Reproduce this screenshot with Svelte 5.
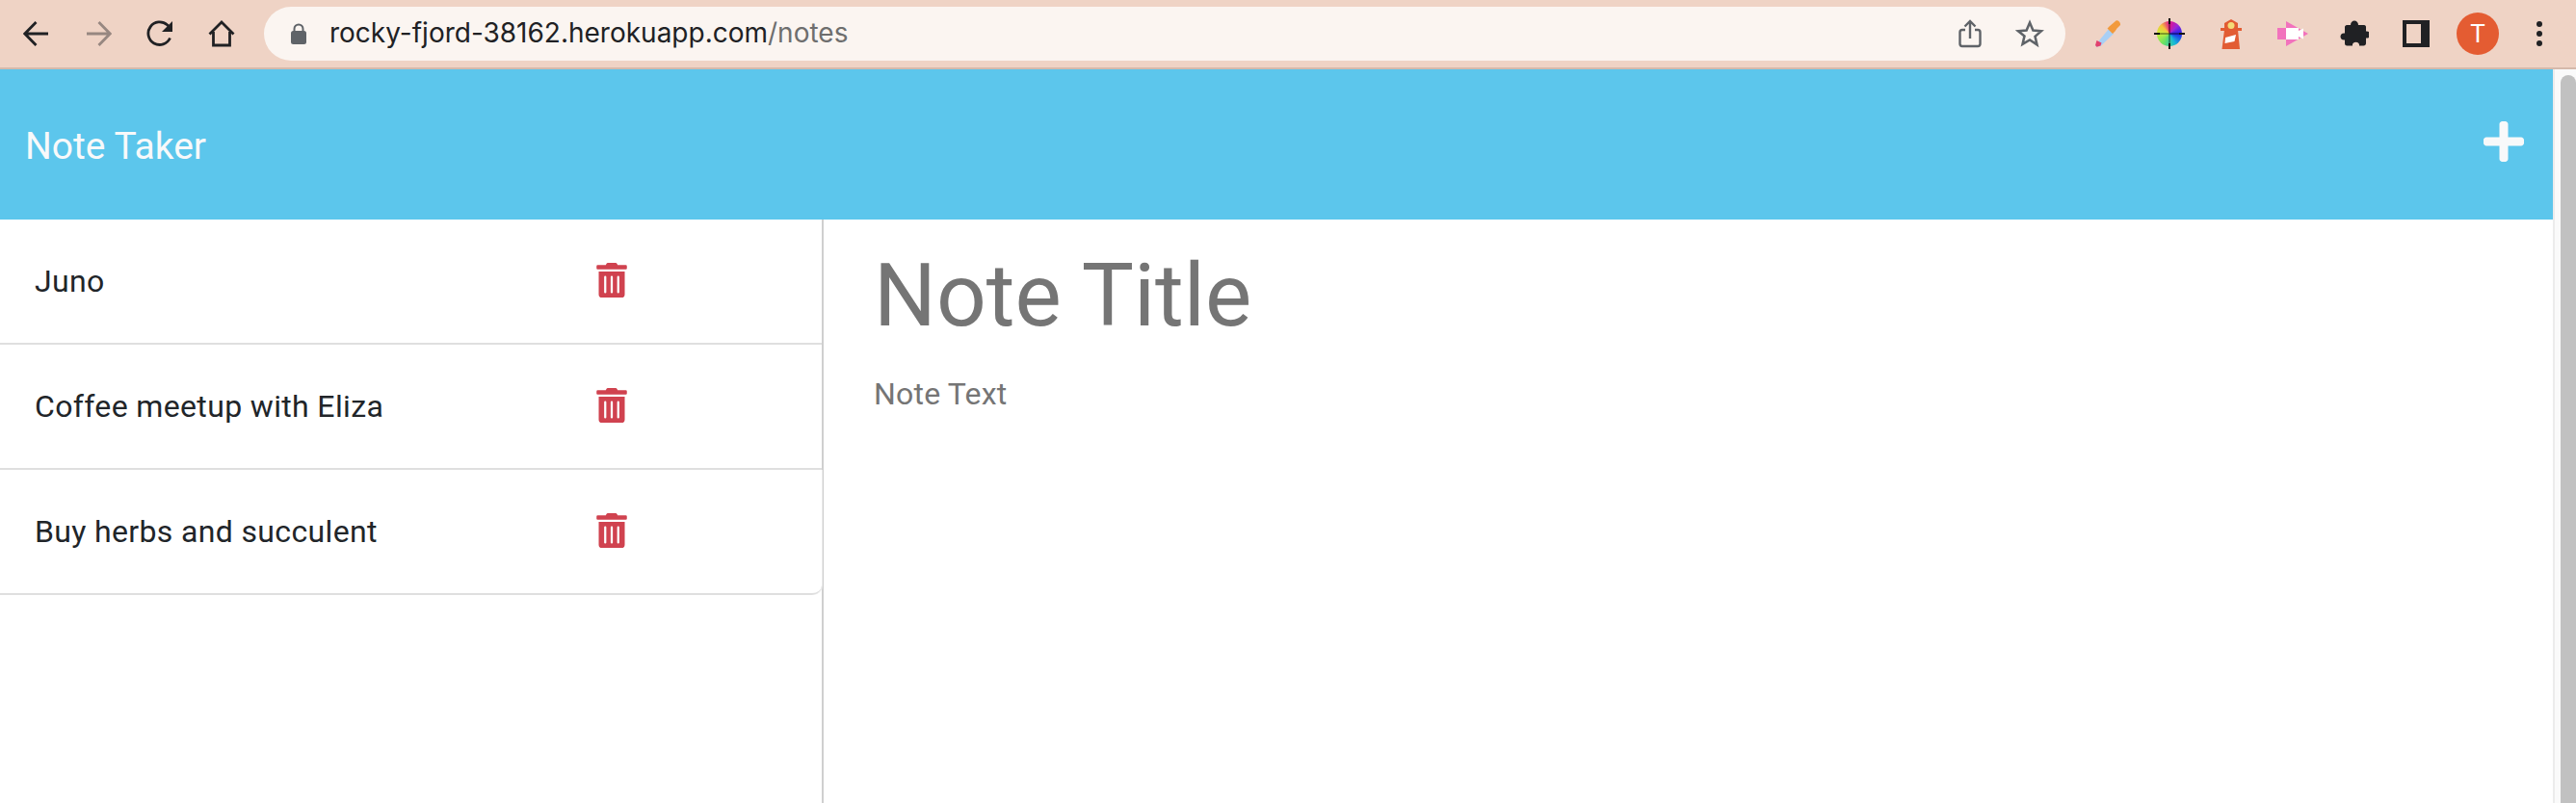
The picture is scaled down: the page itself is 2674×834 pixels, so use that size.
<script>
  const notes = ["Juno", "Coffee meetup with Eliza", "Buy herbs and succulent"];
</script>

<div class="page">
  <div class="toolbar">
    <div class="btn">
      <svg width="28" height="28" viewBox="0 0 28 28"><path d="M26 14H2M13.5 2 1.800 14l11.700 12" class="s" /></svg>
    </div>
    <div class="btn faded">
      <svg width="28" height="28" viewBox="0 0 28 28"><path d="M2 14h24M14.500 2l11.700 12-11.700 12" class="s" /></svg>
    </div>
    <div class="btn">
      <svg width="28" height="28" viewBox="0 0 28 28">
        <path d="M24.500 18.500A11.800 11.800 0 1 1 21.500 4.800L25 8" class="s" />
        <path d="M27 1v11H16z" fill="#202124" />
      </svg>
    </div>
    <div class="btn">
      <svg width="28" height="28" viewBox="0 0 28 28">
        <path d="M1.500 14.500 14 2l12.500 12.500M5.500 12v14h17V12" class="s" />
      </svg>
    </div>

    <div class="omnibox">
      <svg class="lock" width="16" height="22" viewBox="0 0 16 22">
        <rect x="0" y="8" width="16" height="14" rx="2.500" fill="#5f6368" />
        <path d="M3.500 9V6a4.500 4.500 0 0 1 9 0v3" fill="none" stroke="#5f6368" stroke-width="2" />
      </svg>
      <span class="url">rocky-fjord-38162.herokuapp.com<span class="path">/notes</span></span>
      <div class="omni-actions">
        <svg width="24" height="30" viewBox="0 0 24 30">
          <path d="M7 11H4a2.500 2.500 0 0 0-2.500 2.500v12A2.500 2.500 0 0 0 4 28h16a2.500 2.500 0 0 0 2.500-2.500v-12A2.500 2.500 0 0 0 20 11h-3M12 20V2.500M6.500 7.500 12 2l5.500 5.500" fill="none" stroke="#5f6368" stroke-width="2.400" />
        </svg>
        <svg width="30" height="30" viewBox="0 0 30 30">
          <path d="m15 3.500 3.400 8 8.600.7-6.500 5.700 2 8.500L15 21.400l-7.500 4.500 2-8.500L3 12.200l8.600-.7z" fill="none" stroke="#5f6368" stroke-width="2.500" stroke-linejoin="miter" />
        </svg>
      </div>
    </div>

    <div class="btn">
      <svg width="28" height="28" viewBox="0 0 28 28">
        <path d="M15 9 20 14 7 26.500l-4.500 1.300L1 26z" fill="#a8cff5" />
        <path d="M1 26l1.500-5 5 2.500-1 3-4 1.300z" fill="#e2416e" />
        <path d="M13.500 8.500 16 6l3-2.500 3.500-3c2-.8 5 1.500 4.500 4.500l-3.500 3.500-2 3-2.500 2.500z" fill="#f29a3c" />
      </svg>
    </div>
    <div class="btn">
      <div class="wheel">
        <i class="hair h"></i>
        <i class="hair v"></i>
        <i class="tick t"></i>
        <i class="tick b"></i>
        <i class="tick l"></i>
        <i class="tick r"></i>
      </div>
    </div>
    <div class="btn">
      <svg width="24" height="32" viewBox="0 0 24 32">
        <path d="M5 5l7-4 7 4v7l2 20H2.500L5 12z" fill="#e25c33" />
        <rect x="1" y="10" width="22" height="3" fill="#e25c33" />
        <circle cx="12" cy="7.500" r="3.500" fill="#f4dc78" />
        <path d="M6 20l11-3-1.500 7-10 2z" fill="#fff" />
      </svg>
    </div>
    <div class="btn">
      <svg width="34" height="28" viewBox="0 0 34 28">
        <path d="M1 8h9V1l23 13-23 13v-7H1z" fill="#f272bd" />
        <path d="M10 8h13v3l5-2.500v11L23 17v3H10z" fill="#fff" />
      </svg>
    </div>
    <div class="btn">
      <svg width="30" height="30" viewBox="0 0 30 30">
        <path d="M11 6c0-6 8-6 8 0h6c1.500 0 2 1 2 2v4.500c6-1 6 8 0 7V25c0 1.500-1 2.500-2.500 2.500H20c1-5-8-5-7 0H7.500C5.500 27.500 5 26.500 5 25v-3.500c-6 1-6-8 0-7V8c0-1 1-2 2-2z" fill="#202124" />
      </svg>
    </div>
    <div class="btn">
      <div class="panel"></div>
    </div>
    <div class="btn">
      <div class="avatar">T</div>
    </div>
    <div class="btn">
      <div class="dots"><i></i><i></i><i></i></div>
    </div>
  </div>

  <div class="viewport">
    <div class="content">
      <nav class="navbar">
        <span class="brand">Note Taker</span>
        <svg class="plus" width="42" height="48" viewBox="0 0 448 512">
          <path d="M416 208H272V64c0-17.670-14.330-32-32-32h-32c-17.670 0-32 14.330-32 32v144H32c-17.670 0-32 14.330-32 32v32c0 17.670 14.330 32 32 32h144v144c0 17.670 14.330 32 32 32h32c17.670 0 32-14.330 32-32V304h144c17.670 0 32-14.330 32-32v-32c0-17.670-14.330-32-32-32z" fill="#f8f9fa" />
        </svg>
      </nav>

      <div class="columns">
        <aside class="sidebar">
          <ul class="list">
            {#each notes as note}
              <li>
                <span>{note}</span>
                <svg class="trash" width="32" height="36" viewBox="0 0 448 512">
                  <path d="M32 464a48 48 0 0 0 48 48h288a48 48 0 0 0 48-48V128H32zm272-256a16 16 0 0 1 32 0v224a16 16 0 0 1-32 0zm-96 0a16 16 0 0 1 32 0v224a16 16 0 0 1-32 0zm-96 0a16 16 0 0 1 32 0v224a16 16 0 0 1-32 0zM432 32H312l-9.400-18.700A24 24 0 0 0 281.100 0H166.800a23.720 23.720 0 0 0-21.400 13.300L136 32H16A16 16 0 0 0 0 48v32a16 16 0 0 0 16 16h416a16 16 0 0 0 16-16V48a16 16 0 0 0-16-16z" fill="#d0424f" />
                </svg>
              </li>
            {/each}
          </ul>
        </aside>
        <main class="editor">
          <div class="title">Note Title</div>
          <div class="text">Note Text</div>
        </main>
      </div>
    </div>
    <div class="scrollbar"><div class="thumb"></div></div>
  </div>
</div>

<style>
  :global(body) {
    margin: 0;
    background: #fff;
    overflow: hidden;
  }
  .page {
    height: 834px;
    display: flex;
    flex-direction: column;
    font-family: Roboto, "Liberation Sans", sans-serif;
    color: #212529;
  }

  .toolbar {
    height: 70px;
    flex: none;
    display: flex;
    align-items: center;
    padding: 0 6px;
    background: #efd3c5;
    border-bottom: 2px solid #d5b9ab;
  }
  .btn {
    width: 64px;
    height: 64px;
    flex: none;
    display: flex;
    align-items: center;
    justify-content: center;
    position: relative;
  }
  .btn.faded {
    opacity: 0.42;
  }
  .s {
    fill: none;
    stroke: #202124;
    stroke-width: 2.800;
  }

  .omnibox {
    flex: 1;
    height: 56px;
    margin: 0 12px;
    display: flex;
    align-items: center;
    padding-left: 28px;
    padding-right: 22px;
    background: #fbf5f1;
    border-radius: 28px;
  }
  .lock {
    margin-right: 24px;
  }
  .url {
    font-family: Inter, sans-serif;
    font-size: 28px;
    color: #202124;
    white-space: nowrap;
    margin-bottom: 2px;
  }
  .path {
    color: #6e6e6e;
  }
  .omni-actions {
    margin-left: auto;
    display: flex;
    align-items: center;
    gap: 35px;
  }

  .wheel {
    width: 26px;
    height: 26px;
    border-radius: 50%;
    position: relative;
    background: conic-gradient(#e0158c, #9c27d8 45deg, #2222ee 90deg, #16b8d8 150deg, #66e066 210deg, #c8f03c 270deg, #f6c23c 315deg, #e0158c);
  }
  .hair {
    position: absolute;
    background: rgba(0, 0, 0, 0.35);
  }
  .hair.h {
    left: 0;
    right: 0;
    top: 12px;
    height: 2px;
  }
  .hair.v {
    top: 0;
    bottom: 0;
    left: 12px;
    width: 2px;
  }
  .tick {
    position: absolute;
    background: #111;
  }
  .tick.t,
  .tick.b {
    left: 12px;
    width: 2px;
    height: 6px;
  }
  .tick.t {
    top: -3px;
  }
  .tick.b {
    bottom: -3px;
  }
  .tick.l,
  .tick.r {
    top: 12px;
    width: 6px;
    height: 2px;
  }
  .tick.l {
    left: -3px;
  }
  .tick.r {
    right: -3px;
  }
  .panel {
    width: 28px;
    height: 28px;
    box-sizing: border-box;
    border: 4px solid #202124;
    border-right-width: 9px;
    background: #efd3c5;
  }
  .avatar {
    width: 44px;
    height: 44px;
    border-radius: 50%;
    background: #e45c32;
    color: #fff;
    font-size: 26px;
    line-height: 44px;
    text-align: center;
  }
  .dots {
    display: flex;
    flex-direction: column;
    gap: 4px;
  }
  .dots i {
    width: 6px;
    height: 6px;
    border-radius: 50%;
    background: #202124;
  }

  .viewport {
    flex: 1;
    min-height: 0;
    display: flex;
  }
  .content {
    flex: 1;
    min-width: 0;
    display: flex;
    flex-direction: column;
  }
  .scrollbar {
    width: 24px;
    flex: none;
    box-sizing: border-box;
    padding: 6px 0 0 6px;
    background: #fafafa;
    border-left: 2px solid #ececec;
  }
  .thumb {
    height: 100%;
    background: #c1c1c1;
    border-radius: 8px 8px 0 0;
  }

  .navbar {
    height: 156px;
    flex: none;
    box-sizing: border-box;
    padding: 0 30px 0 26px;
    display: flex;
    align-items: center;
    justify-content: space-between;
    background: #5cc6ec;
  }
  .brand {
    font-size: 39px;
    color: #f8f9fa;
    margin-top: 3px;
  }
  .plus {
    margin-bottom: 6px;
  }

  .columns {
    flex: 1;
    min-height: 0;
    display: flex;
  }
  .sidebar {
    width: 853px;
    flex: none;
    border-right: 2px solid #cfcfcf;
  }
  .list {
    list-style: none;
    margin: 0;
    padding: 0;
  }
  .list li {
    height: 130px;
    box-sizing: border-box;
    padding-left: 36px;
    display: flex;
    align-items: center;
    position: relative;
    font-size: 32px;
    letter-spacing: 0.35px;
    border-bottom: 2px solid #dfdfdf;
  }
  .list li:last-child {
    border-bottom-right-radius: 10px;
    box-shadow: 1px 0 0 #ececec;
  }
  .trash {
    position: absolute;
    left: 619px;
    top: 45px;
  }

  .editor {
    flex: 1;
    padding: 0 0 0 52px;
    color: #757575;
  }
  .title {
    font-size: 91px;
    line-height: 96px;
    margin-top: 31px;
  }
  .text {
    font-size: 32px;
    line-height: 44px;
    margin-top: 32px;
    letter-spacing: 0.2px;
  }
</style>
